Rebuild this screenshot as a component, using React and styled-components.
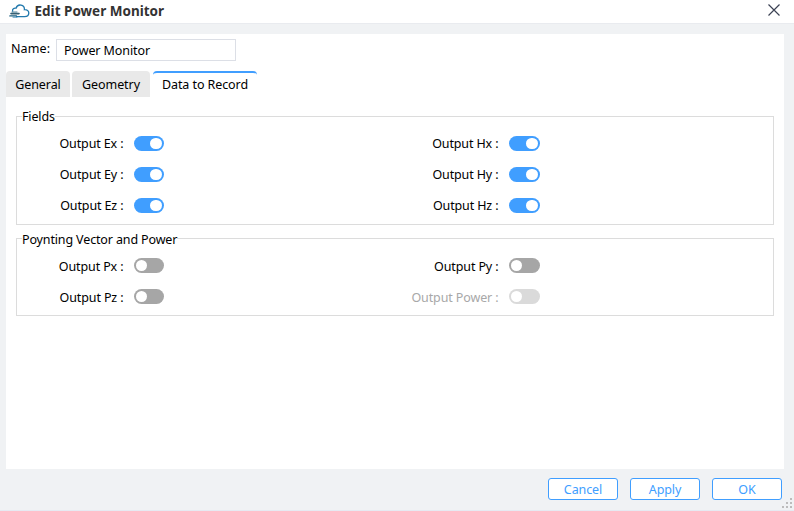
import React from "react";
import styled, { createGlobalStyle } from "styled-components";

const Global = createGlobalStyle`
  * { box-sizing: border-box; }
  body { margin: 0; overflow: hidden; }
`;

const Dialog = styled.div`
  display: flex;
  flex-direction: column;
  width: 794px;
  height: 511px;
  background: #f0f2f4;
  border-bottom: 1px solid #e6eaf2;
  font-family: "Noto Sans", sans-serif;
  font-size: 12.5px;
  line-height: 18px;
  color: #000;
`;

const TitleBar = styled.header`
  display: flex;
  align-items: flex-start;
  flex: none;
  height: 24px;
  padding: 2px 13px 0 9px;
  background: #fff;
  border-bottom: 1px solid #e9ebef;
`;

const Logo = styled.svg`
  width: 21px;
  height: 16px;
  margin-top: 1px;
`;

const Title = styled.h1`
  flex: 1;
  margin: 0 0 0 4.5px;
  font-size: 13.5px;
  line-height: 18px;
  font-weight: 700;
  color: #333;
`;

const CloseIcon = styled.svg`
  width: 14px;
  height: 14px;
  margin-top: 1px;
`;

const Panel = styled.main`
  flex: none;
  width: 778px;
  height: 435px;
  margin: 10px 0 0 6px;
  padding-top: 5px;
  background: #fff;
`;

const NameRow = styled.label`
  display: flex;
  height: 22px;
  padding-left: 5px;
`;

const Label = styled.span`
  width: 45px;
  padding-top: 1px;
  white-space: nowrap;
  letter-spacing: 0.1px;
`;

const NameInput = styled.input`
  width: 180px;
  height: 22px;
  padding: 1px 7px 0;
  border: 1px solid #dcdfe6;
  outline: none;
  background: #fff;
  font: inherit;
  letter-spacing: -0.1px;
  color: #000;
`;

const Tabs = styled.nav`
  display: flex;
  height: 26px;
  margin-top: 10px;
`;

const Tab = styled.button`
  width: ${(p) => p.$width}px;
  height: 26px;
  margin: 0 ${(p) => p.$gap || 0}px 0 0;
  padding: ${(p) => (p.$active ? 0 : 2)}px 0 0;
  border: 0;
  border-top: ${(p) => (p.$active ? "2px solid #409eff" : "0")};
  border-radius: 4px 4px 0 0;
  background: ${(p) => (p.$active ? "#fff" : "#e9e9e9")};
  font: inherit;
  letter-spacing: -0.08px;
  color: #000;
  white-space: nowrap;
`;

const Group = styled.section`
  position: relative;
  display: grid;
  grid-template-columns: 375px 1fr;
  grid-auto-rows: 31px;
  align-content: start;
  width: 758px;
  height: ${(p) => p.$height}px;
  margin: ${(p) => p.$top}px 0 0 10px;
  padding-top: ${(p) => p.$inset}px;
  border: 1px solid #dcdcdc;
`;

const Legend = styled.h2`
  position: absolute;
  top: ${(p) => p.$top}px;
  left: 5px;
  margin: 0;
  background: #fff;
  font-size: inherit;
  font-weight: 400;
  letter-spacing: -0.14px;
  white-space: nowrap;
`;

const Field = styled.div`
  display: flex;
  align-items: flex-start;
  color: ${(p) => (p.$disabled ? "#a8a8a8" : "#000")};
`;

const FieldLabel = styled.span`
  width: 106.5px;
  margin-right: 10.5px;
  padding-top: ${(p) => p.$drop}px;
  text-align: right;
  letter-spacing: -0.12px;
  white-space: nowrap;
`;

const Switch = styled.button`
  display: flex;
  justify-content: ${(p) => (p.$on ? "flex-end" : "flex-start")};
  align-items: center;
  width: ${(p) => p.$width}px;
  height: 15px;
  margin: 1px 0 0;
  padding: 0 ${(p) => (p.$on ? 2.5 : 1.5)}px;
  border: 0;
  border-radius: 8px;
  background: ${(p) => (p.$disabled ? "#dadada" : p.$on ? "#409eff" : "#a6a6a6")};
`;

const Knob = styled.span`
  width: 11.6px;
  height: 11.6px;
  border-radius: 50%;
  background: #fff;
`;

const Footer = styled.footer`
  display: flex;
  justify-content: flex-end;
  gap: 12px;
  padding: 9px 2px 0 0;
`;

const Button = styled.button`
  width: 70px;
  height: 22px;
  padding: 1px 0 0;
  border: 1px solid #409eff;
  border-radius: 3px;
  background: #fff;
  font: inherit;
  line-height: 18px;
  letter-spacing: -0.1px;
  color: #409eff;
`;

const Grip = styled.svg`
  width: 10px;
  height: 10px;
  margin: 20px 0 0 -12px;
`;

function SwitchField({ name, on = false, disabled = false, width = 30, drop = 0 }) {
  return (
    <Field $disabled={disabled}>
      <FieldLabel $drop={drop}>{name} :</FieldLabel>
      <Switch $on={on} $disabled={disabled} $width={width} disabled={disabled} aria-label={name}>
        <Knob />
      </Switch>
    </Field>
  );
}

export default function App() {
  return (
    <>
      <Global />
      <Dialog>
        <TitleBar>
          <Logo viewBox="0 0 21 16" fill="none" strokeLinecap="round">
            <path d="M3.6 8.2C3.2 6 4.8 4.8 7 5.2C7.8 2.8 9.8 1.7 12 2.1C14.4 2.5 15.6 4.4 15.4 6.7C18 6.5 19.8 7.9 19.8 10C19.8 12.3 18 13.6 15.6 13.6H7.5" stroke="#2279ad" strokeWidth="1.3" />
            <path d="M3 9H8" stroke="#3b7591" strokeWidth="0.9" />
            <path d="M2 10.6H10" stroke="#355f73" strokeWidth="1.6" />
            <path d="M0.8 12.9H7.5" stroke="#1d6080" strokeWidth="1.2" />
            <path d="M4 14.2H8" stroke="#2279ad" strokeWidth="0.8" />
          </Logo>
          <Title>Edit Power Monitor</Title>
          <CloseIcon viewBox="0 0 14 14">
            <path d="M1.5 1.5L12.5 12.5M12.5 1.5L1.5 12.5" stroke="#3c4254" strokeWidth="1.2" />
          </CloseIcon>
        </TitleBar>
        <Panel>
          <NameRow>
            <Label>Name:</Label>
            <NameInput defaultValue="Power Monitor" />
          </NameRow>
          <Tabs>
            <Tab $width={64} $gap={2}>General</Tab>
            <Tab $width={78} $gap={3}>Geometry</Tab>
            <Tab $width={104} $active>Data to Record</Tab>
          </Tabs>
          <Group $height={109} $top={19} $inset={18}>
            <Legend $top={-9}>Fields</Legend>
            <SwitchField name="Output Ex" on />
            <SwitchField name="Output Hx" on width={31} />
            <SwitchField name="Output Ey" on />
            <SwitchField name="Output Hy" on width={31} />
            <SwitchField name="Output Ez" on />
            <SwitchField name="Output Hz" on width={31} />
          </Group>
          <Group $height={78} $top={13} $inset={18}>
            <Legend $top={-8}>Poynting Vector and Power</Legend>
            <SwitchField name="Output Px" drop={1} />
            <SwitchField name="Output Py" drop={1} width={31} />
            <SwitchField name="Output Pz" drop={1} />
            <SwitchField name="Output Power" drop={1} disabled width={31} />
          </Group>
        </Panel>
        <Footer>
          <Button>Cancel</Button>
          <Button>Apply</Button>
          <Button>OK</Button>
          <Grip viewBox="0 0 10 10" fill="#bcbcbc">
            <path d="M8 0h2v2H8zM4 4h2v2H4zM8 4h2v2H8zM0 8h2v2H0zM4 8h2v2H4zM8 8h2v2H8z" />
          </Grip>
        </Footer>
      </Dialog>
    </>
  );
}
